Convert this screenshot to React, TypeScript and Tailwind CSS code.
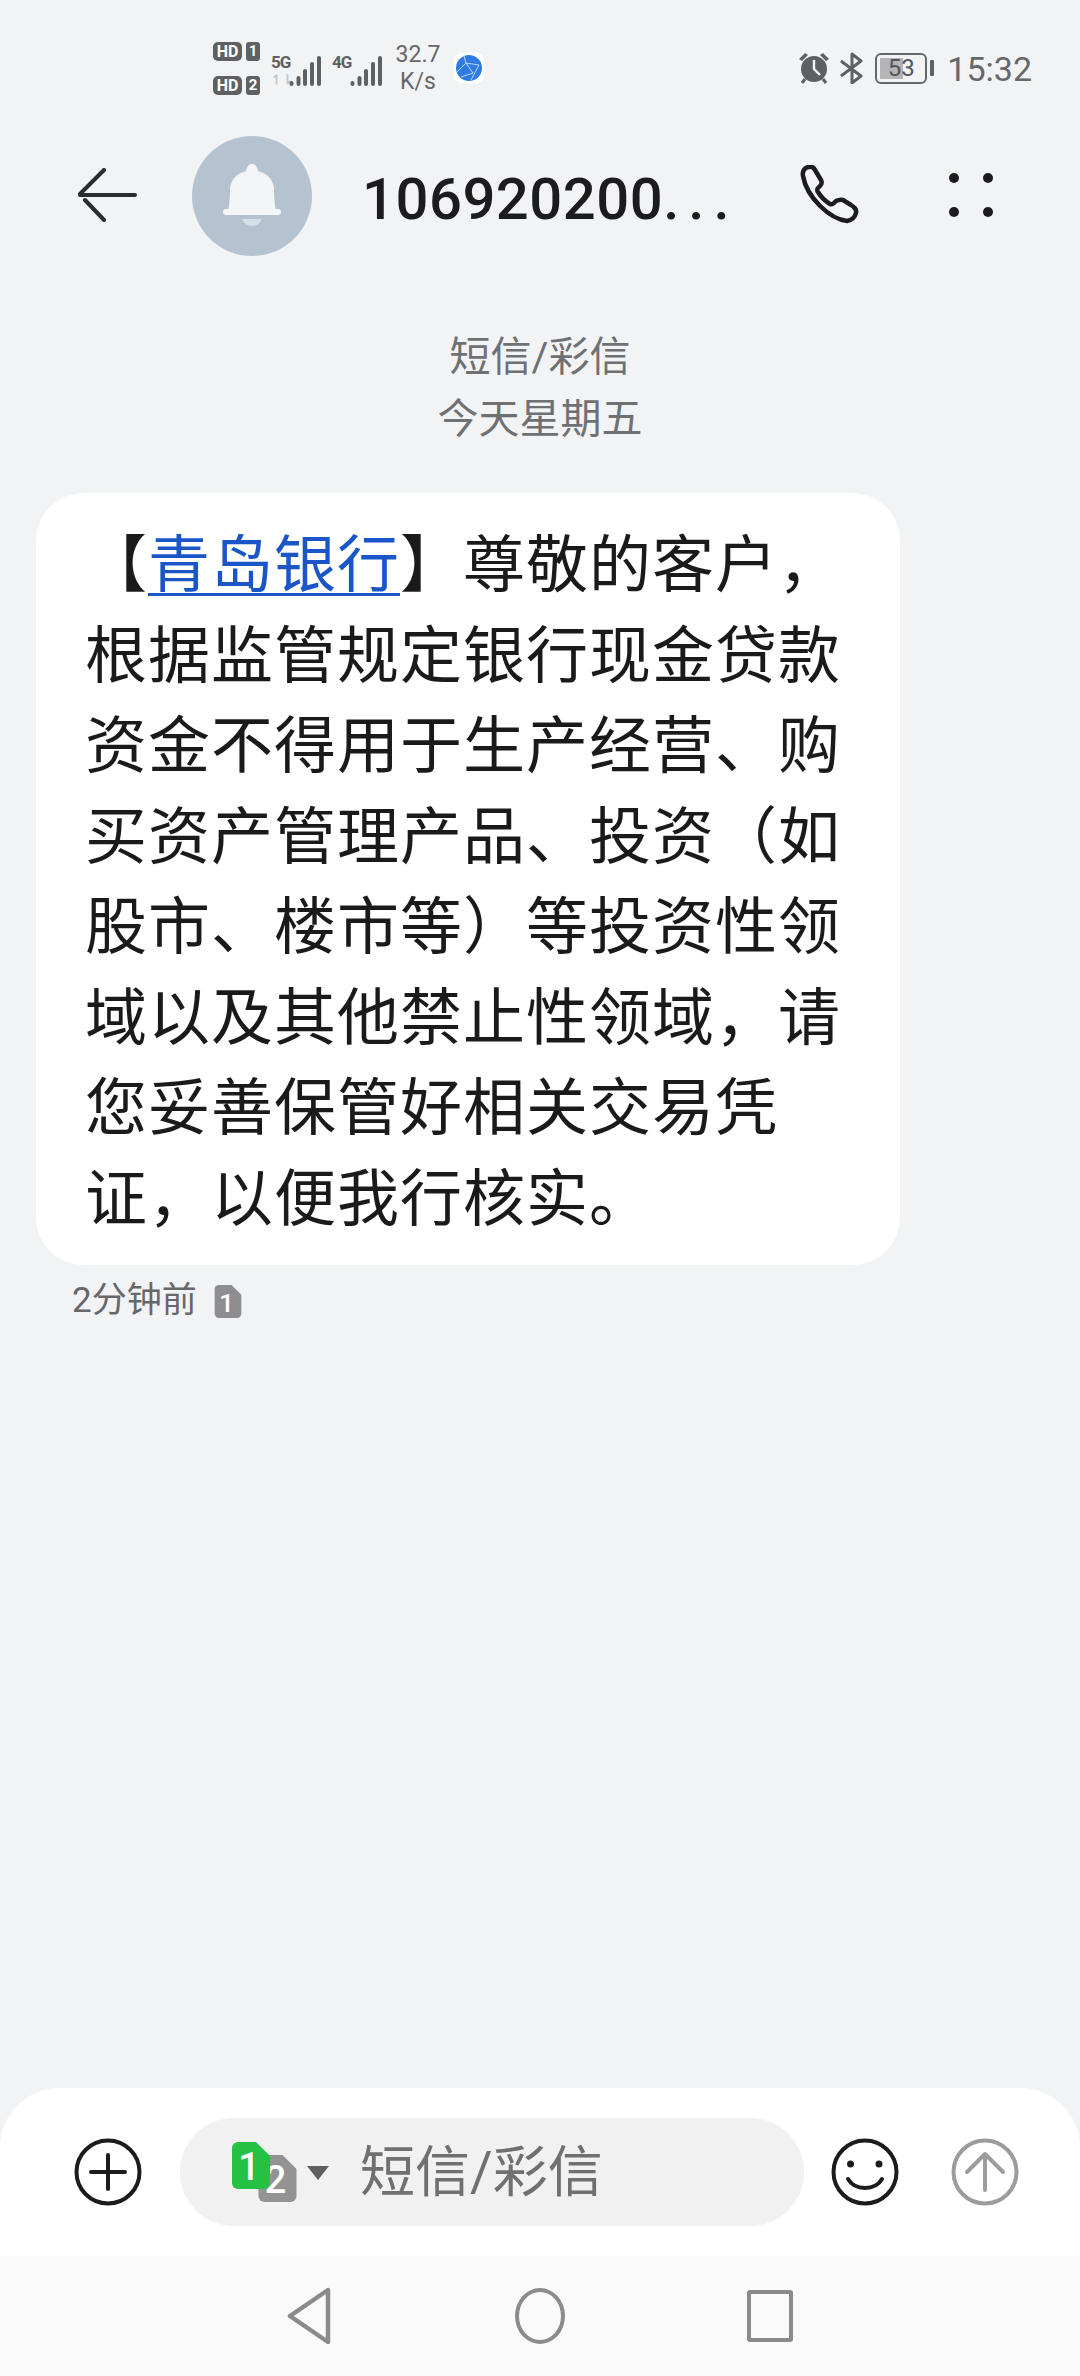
const cjk = "font-['Roboto','Noto_Sans_CJK_SC',sans-serif]"

function SimChip({ n, color, className }: { n: string; color: string; className: string }) {
  return (
    <svg viewBox="0 0 38 47" className={className}>
      <path d="M6 0H24L38 14V41a6 6 0 0 1-6 6H6a6 6 0 0 1-6-6V6a6 6 0 0 1 6-6Z" fill={color} />
      <text x="17" y="38" fontSize="38" fontWeight="500" textAnchor="middle" fill="#fff" fontFamily="Roboto, sans-serif">{n}</text>
    </svg>
  )
}

function HdRow({ n }: { n: string }) {
  return (
    <div className="flex items-center gap-[4px]">
      <div className="w-[29px] h-[19px] rounded-[5px] bg-[#5f6063] text-white text-[16px] leading-[19px] font-bold text-center font-['Roboto',sans-serif]">HD</div>
      <div className="w-[14px] h-[19px] rounded-[3px] bg-[#5f6063] text-white text-[15px] leading-[19px] font-bold text-center font-['Roboto',sans-serif]">{n}</div>
    </div>
  )
}

function Signal({ className }: { className: string }) {
  return (
    <svg viewBox="0 0 32 31" className={className}>
      <g stroke="#5f6063" strokeWidth="4" strokeLinecap="round">
        <line x1="2.500" y1="28" x2="2.500" y2="29" />
        <line x1="9.500" y1="23" x2="9.500" y2="29" />
        <line x1="16" y1="16" x2="16" y2="29" />
        <line x1="23" y1="9" x2="23" y2="29" />
        <line x1="30" y1="3" x2="30" y2="29" />
      </g>
    </svg>
  )
}

function StatusBar() {
  return (
    <div className="h-[136px] flex items-center justify-between pl-[213px] pr-[48px] text-[#5f6063] font-['Roboto',sans-serif]">
      <div className="flex items-center">
        <div className="flex flex-col gap-[15px]">
          <HdRow n="1" />
          <HdRow n="2" />
        </div>
        <div className="ml-[11px] w-[50px] h-[31px] relative mt-[4px]">
          <span className="absolute left-0 top-0 text-[17px] leading-[15px] font-bold tracking-[-1px]">5G</span>
          <span className="absolute left-0 top-[19px] text-[13px] leading-[12px] font-bold text-[#c4c5c7]">↿⇂</span>
          <Signal className="absolute right-0 top-0 w-[32px] h-[31px]" />
        </div>
        <div className="ml-[11px] w-[51px] h-[31px] relative mt-[4px]">
          <span className="absolute left-0 top-0 text-[17px] leading-[15px] font-bold tracking-[-1px]">4G</span>
          <Signal className="absolute right-0 top-0 w-[34px] h-[31px]" />
        </div>
        <div className="ml-[13px] w-[44px] flex flex-col items-center text-[23px] leading-[27px] text-[#66676a]">
          <span>32.7</span>
          <span>K/s</span>
        </div>
        <div className="ml-[14px] w-[30px] h-[30px] rounded-[7px] bg-white flex items-center justify-center">
          <svg viewBox="0 0 26 26" className="w-[26px] h-[26px]">
            <circle cx="13" cy="13" r="13" fill="#2f7be6" />
            <path d="M1 17 10 8l13 2M10 8 8 1M23 10 15 25M10 8 17 18 5 22" stroke="#bcd8fa" strokeWidth="1" fill="none" />
          </svg>
        </div>
      </div>
      <div className="flex items-center">
        <svg viewBox="0 0 32 32" className="w-[32px] h-[32px]">
          <path d="M1 7 7 1l3 2-6 6ZM31 7 25 1l-3 2 6 6Z" fill="#5f6063" />
          <circle cx="16" cy="17" r="13" fill="#5f6063" />
          <path d="M16 8v9l6 6" stroke="#f2f3f5" strokeWidth="2.400" fill="none" />
          <path d="M7 27 4 31M25 27l3 4" stroke="#5f6063" strokeWidth="3" />
        </svg>
        <svg viewBox="0 0 24 32" className="w-[24px] h-[32px] ml-[10px]" fill="none" stroke="#5f6063" strokeWidth="3" strokeLinejoin="round">
          <path d="M1 9 21 24l-9 7V2l9 7L1 24" />
        </svg>
        <div className="ml-[11px] w-[52px] h-[31px] rounded-[6px] border-[2.5px] border-[#66676a] p-[3px] relative">
          <div className="h-full w-[53%] bg-[#b4b5b7]" />
          <span className="absolute inset-0 text-center text-[24px] leading-[26px] text-[#55565a]">53</span>
        </div>
        <div className="ml-[3px] w-[4px] h-[16px] rounded-[1px] bg-[#5f6063]" />
        <span className="ml-[13px] mt-[2px] text-[34px] leading-[36px] text-[#66676a]">15:32</span>
      </div>
    </div>
  )
}

function Header() {
  return (
    <div className="h-[120px] flex items-center relative">
      <svg viewBox="0 0 62 56" className="ml-[77px] w-[62px] h-[56px]" fill="none" stroke="#2b2c2e" strokeWidth="4" strokeLinecap="round">
        <path d="M3 27H58M3 26 27 2M8 32 27 52" />
      </svg>
      <div className="ml-[53px] w-[120px] h-[120px] rounded-full bg-[#b5c3d1] flex items-center justify-center">
        <svg viewBox="0 0 60 64" className="w-[60px] h-[64px]">
          <path d="M6 47C8 38 8 30 8 24 9 14 17 9 24 7 25 2 27 0 30 0s5 2 6 7c7 2 15 7 16 17 0 6 0 14 2 23Z" fill="#f3f5f7" />
          <rect x="0" y="45" width="58" height="6" rx="3" fill="#f3f5f7" transform="translate(1 0)" />
          <path d="M20 55H40C38 60 34 62 30 62S22 60 20 55Z" fill="#d5dfe8" />
        </svg>
      </div>
      <span className={`ml-[50px] mt-[6px] w-[372px] whitespace-nowrap text-[58px] leading-[70px] font-medium text-[#1c1c1e] tracking-[0.5px] ${cjk}`}>
        106920200<span className="tracking-[9px]">...</span>
      </span>
      <svg viewBox="0 0 60 60" className="absolute left-[800px] top-[29px] w-[60px] h-[60px]" fill="none" stroke="#1c1c1e" strokeWidth="4.5" strokeLinejoin="round">
        <path d="M3 11C2 6 5 2 9 2 12 1 14 3 15 5l6 10c1 2 1 4-1 6l-2 2c-1 1-1 3 0 4 3 5 7 9 12 12 2 1 3 0 4-1l2-2c2-1 4-2 7-1l8 5c3 2 6 4 5 8-1 4-4 7-9 8C30 54 7 33 3 11Z" />
      </svg>
      <div className="absolute left-[949px] top-[37px] grid grid-cols-2 gap-x-[24px] gap-y-[24px]">
        <div className="w-[10px] h-[10px] rounded-full bg-[#1c1c1e]" />
        <div className="w-[10px] h-[10px] rounded-full bg-[#1c1c1e]" />
        <div className="w-[10px] h-[10px] rounded-full bg-[#1c1c1e]" />
        <div className="w-[10px] h-[10px] rounded-full bg-[#1c1c1e]" />
      </div>
    </div>
  )
}

const lines = [
  "根据监管规定银行现金贷款",
  "资金不得用于生产经营、购",
  "买资产管理产品、投资（如",
  "股市、楼市等）等投资性领",
  "域以及其他禁止性领域，请",
  "您妥善保管好相关交易凭",
  "证，以便我行核实。",
]

function Bubble() {
  return (
    <div className={`ml-[36px] mt-[43px] w-[864px] h-[772px] rounded-[48px] bg-white pl-[49px] pt-[28px] text-[62px] leading-[90.5px] tracking-[1px] text-[#1a1a1a] ${cjk}`}>
      <div className="whitespace-nowrap">
        【<span className="text-[#1a56c8] underline underline-offset-[6px] decoration-[3px]">青岛银行</span>】尊敬的客户，
      </div>
      {lines.map((l) => (
        <div key={l} className="whitespace-nowrap">{l}</div>
      ))}
    </div>
  )
}

function Composer() {
  return (
    <div className="h-[168px] bg-white rounded-t-[60px] flex items-center relative">
      <svg viewBox="0 0 68 68" className="ml-[74px] w-[68px] h-[68px]" fill="none" stroke="#1c1c1e" strokeWidth="4" strokeLinecap="round">
        <circle cx="34" cy="34" r="31.500" />
        <path d="M17 34H51M34 17V51" />
      </svg>
      <div className="ml-[38px] w-[624px] h-[108px] rounded-full bg-[#f1f1f2] flex items-center relative">
        <SimChip n="1" color="#25c145" className="absolute left-[52px] top-[24px] w-[38px] h-[47px] z-10" />
        <SimChip n="2" color="#939393" className="absolute left-[78px] top-[37px] w-[39px] h-[47px]" />
        <svg viewBox="0 0 22 14" className="absolute left-[127px] top-[48px] w-[22px] h-[14px]">
          <path d="M0 0H22L11 14Z" fill="#5f5f5f" />
        </svg>
        <span className={`ml-[180px] text-[55px] leading-[64px] text-[#707070] ${cjk}`}>短信/彩信</span>
      </div>
      <svg viewBox="0 0 68 68" className="ml-[27px] w-[68px] h-[68px]" fill="none" stroke="#1c1c1e" strokeWidth="4" strokeLinecap="round">
        <circle cx="34" cy="34" r="31.500" />
        <circle cx="19.500" cy="26" r="3.500" fill="#1c1c1e" stroke="none" />
        <circle cx="48" cy="26" r="3.500" fill="#1c1c1e" stroke="none" />
        <path d="M17 41C24 53 44 53 51 41" />
      </svg>
      <svg viewBox="0 0 68 68" className="ml-[52px] w-[68px] h-[68px]" fill="none" stroke="#9c9c9c" strokeWidth="4" strokeLinecap="round" strokeLinejoin="round">
        <circle cx="34" cy="34" r="31.500" />
        <path d="M34 52V17M16 34 34 16 52 34" />
      </svg>
    </div>
  )
}

function NavBar() {
  return (
    <div className="h-[120px] bg-[#fafafa] relative flex items-center">
      <svg viewBox="0 0 44 58" className="ml-[287px] w-[44px] h-[58px]" fill="none" stroke="#8b8b8b" strokeWidth="4.500" strokeLinejoin="round">
        <path d="M41 3V55L3 29Z" />
      </svg>
      <div className="ml-[184px] w-[50px] h-[56px] rounded-[50%] border-[4.5px] border-[#8b8b8b]" />
      <div className="ml-[182px] w-[46px] h-[52px] rounded-[3px] border-[4.5px] border-[#8b8b8b]" />
    </div>
  )
}

export default function App() {
  return (
    <div className="w-[1080px] h-[2376px] bg-[#f2f3f5] flex flex-col overflow-hidden">
      <StatusBar />
      <Header />
      <div className={`mt-[70px] flex flex-col items-center text-[41px] leading-[62px] text-[#6f7073] ${cjk}`}>
        <span>短信/彩信</span>
        <span>今天星期五</span>
      </div>
      <Bubble />
      <div className={`ml-[72px] mt-[14px] flex items-center text-[35px] leading-[44px] text-[#66676a] ${cjk}`}>
        <span>2分钟前</span>
        <SimChip n="1" color="#8e8e90" className="ml-[17px] w-[28px] h-[33px]" />
      </div>
      <div className="flex-1" />
      <Composer />
      <NavBar />
    </div>
  )
}
